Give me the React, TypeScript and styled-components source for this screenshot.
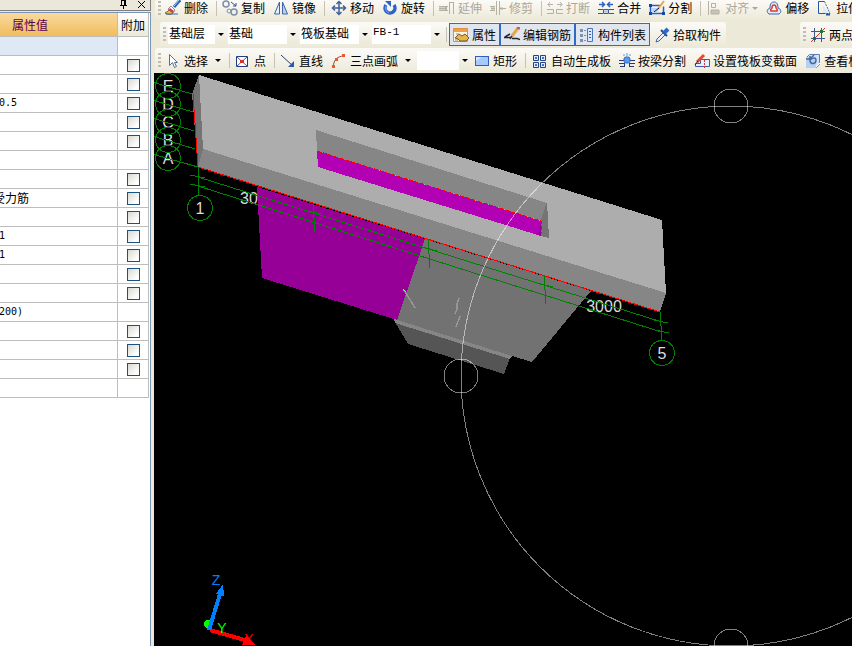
import React from "react";
import styled, { createGlobalStyle } from "styled-components";

const GlobalStyle = createGlobalStyle`
  * { box-sizing: border-box; }
  body {
    margin: 0;
    font-family: "Noto Sans CJK SC", sans-serif;
    font-size: 12px;
    line-height: 16px;
    color: #000;
    background: #ece9d8;
  }
  button, select, input { font: inherit; color: inherit; margin: 0; }
`;

const Page = styled.div`
  display: flex;
  height: 100vh;
  overflow: hidden;
`;

/* ---------- property panel ---------- */

const Panel = styled.aside`
  flex: none;
  width: 151px;
  display: flex;
  flex-direction: column;
  overflow: hidden;
`;

const PanelTitle = styled.header`
  flex: none;
  display: flex;
  justify-content: flex-end;
  gap: 9px;
  height: 11px;
  padding-right: 4px;
  border-right: 1px solid #808080;
  border-bottom: 1px solid #808080;
  background: #ebe8db;
`;

const TitleButton = styled.button`
  width: 9px;
  height: 9px;
  padding: 0;
  border: 0;
  background: none;
  display: flex;
`;

const PanelBody = styled.div`
  flex: 1;
  margin-top: 1px;
  border-top: 1px solid #7996ba;
  border-right: 1px solid #7996ba;
  background: #fff;
  overflow: hidden;
`;

const PropertyTable = styled.table`
  table-layout: fixed;
  width: 157px;
  margin-left: -8px;
  border-collapse: separate;
  border-spacing: 0;
`;

const ValueHead = styled.th`
  width: 126px;
  height: 24px;
  padding: 0;
  font-weight: 400;
  text-align: left;
  text-indent: 20px;
  color: #5c0050;
  border-right: 1px solid #bdbdbd;
  border-bottom: 1px solid #bdbdbd;
  background: linear-gradient(#f9d99f, #f0bd5c);
`;

const ExtraHead = styled.th`
  padding: 0;
  font-weight: 400;
  border-right: 1px solid #bdbdbd;
  border-bottom: 1px solid #bdbdbd;
  background: linear-gradient(#fff, #ece9d8);
`;

const ValueCell = styled.td<{ $selected?: boolean; $latin?: boolean }>`
  height: 19px;
  padding: 0 0 0 ${(p) => (p.$latin ? 7 : 1)}px;
  font-size: ${(p) => (p.$latin ? 10 : 12)}px;
  font-family: ${(p) => (p.$latin ? '"DejaVu Sans Mono", monospace' : "inherit")};
  white-space: nowrap;
  border-right: 1px solid #bdbdbd;
  border-bottom: 1px solid #bdbdbd;
  background: ${(p) => (p.$selected ? "#dfe9f6" : "#fff")};
`;

const ExtraCell = styled.td`
  padding: 0;
  border-right: 1px solid #bdbdbd;
  border-bottom: 1px solid #bdbdbd;
`;

const Tick = styled.input`
  appearance: none;
  display: block;
  width: 13px;
  height: 13px;
  margin: 1px auto 0 9px;
  border: 1px solid #1c5180;
  background: linear-gradient(135deg, #d8d8d2, #fff 80%);
`;

type Row = { value?: string; latin?: boolean; tick?: boolean; selected?: boolean };

const rows: Row[] = [
  { selected: true },
  { tick: true },
  { tick: true },
  { value: "0.5", latin: true, tick: true },
  { tick: true },
  { tick: true },
  {},
  { tick: true },
  { value: "受力筋", tick: true },
  { tick: true },
  { value: "1", latin: true, tick: true },
  { value: "1", latin: true, tick: true },
  { tick: true },
  { tick: true },
  { value: "200)", latin: true },
  { tick: true },
  { tick: true },
  { tick: true },
  {},
];

/* ---------- toolbars ---------- */

const Main = styled.main`
  flex: 1;
  min-width: 0;
  display: flex;
  flex-direction: column;
  border-left: 3px solid #ece9d8;
`;

const ToolRow = styled.div<{ $height: number; $gap?: number; $inset: number }>`
  flex: none;
  display: flex;
  height: ${(p) => p.$height}px;
  margin-bottom: ${(p) => p.$gap ?? 0}px;
  padding-left: ${(p) => p.$inset}px;
  overflow: hidden;
`;

const Bar = styled.div<{ $grow?: boolean; $lift?: boolean; $spaced?: boolean }>`
  display: flex;
  align-items: center;
  flex: ${(p) => (p.$grow ? "1 0 auto" : "none")};
  margin-left: ${(p) => (p.$spaced ? 74 : 0)}px;
  padding: 0 1px ${(p) => (p.$lift ? 4 : 0)}px 3px;
  border-radius: 3px;
  white-space: nowrap;
  background: linear-gradient(#fbfaf6, #f4f2e8 50%, #ece9d8);
`;

const Grip = styled.span`
  flex: none;
  width: 3px;
  height: 15px;
  background: repeating-linear-gradient(#c1beb0 0 2px, transparent 2px 4px);
`;

const Separator = styled.span<{ $wide?: boolean }>`
  flex: none;
  width: ${(p) => (p.$wide ? 7 : 6)}px;
  height: 15px;
  background: linear-gradient(#c5c2b4, #c5c2b4) 4px 0 / 1px 100% no-repeat;
`;

const ToolButton = styled.button<{ $pressed?: boolean }>`
  flex: none;
  display: flex;
  align-items: center;
  gap: 3px;
  height: 23px;
  padding: 0 ${(p) => (p.$pressed ? 3 : 4)}px;
  border: ${(p) => (p.$pressed ? "1px solid #316ac5" : "0")};
  background: ${(p) => (p.$pressed ? "#e1e6ee" : "none")};
  white-space: nowrap;

  &:disabled { color: #aca899; }
`;

const IconBox = styled.svg`
  flex: none;
  display: block;
  width: 16px;
  height: 16px;
  fill: none;
`;

const Arrow = styled.span<{ $wide?: boolean }>`
  width: 0;
  height: 0;
  margin-left: ${(p) => (p.$wide ? 4 : 0)}px;
  border: 3px solid transparent;
  border-bottom-width: 0;
  border-top-color: currentColor;
`;

const Combo = styled.label<{ $width: number }>`
  flex: none;
  display: grid;
  width: ${(p) => p.$width}px;
  height: 19px;
  margin-left: 2px;
  background: #fff;
`;

const ComboSelect = styled.select<{ $latin?: boolean }>`
  grid-area: 1 / 1;
  appearance: none;
  width: 100%;
  height: 19px;
  padding: 0 12px 4px 1px;
  border: 0;
  border-radius: 0;
  background: none;
  font-family: ${(p) => (p.$latin ? '"Liberation Mono", monospace' : "inherit")};
  font-size: ${(p) => (p.$latin ? 11 : 12)}px;
  line-height: 15px;
`;

const ComboArrow = styled.span`
  grid-area: 1 / 1;
  justify-self: end;
  display: flex;
  align-items: center;
  justify-content: center;
  width: 11px;
  background: linear-gradient(#faf9f4, #ece9d8);
  pointer-events: none;
`;

const Viewport = styled.section`
  flex: 1;
  min-height: 0;
  overflow: hidden;
  background: #000;
`;

const Scene = styled.svg`
  display: block;
  width: 100%;
  height: 100%;
`;

const SceneText = styled.text`
  font-family: "Liberation Sans", sans-serif;
  font-size: 16px;
  fill: #dcdcdc;
  text-anchor: middle;
`;

const AxisText = styled.text`
  font-family: "Liberation Sans", sans-serif;
  font-size: 14px;
  text-anchor: middle;
`;

/* ---------- icons ---------- */

const icons: Record<string, React.ReactNode> = {
  brush: (
    <>
      <path d="M15 0 9 7" stroke="#2c66b8" strokeWidth="3" />
      <path d="m14 0-5 6" stroke="#a9cdf5" />
      <path d="m6 6 4 4-2 3-5-4z" fill="#fff" stroke="#a08090" />
      <path d="m5 8 4 3-2 3-4-3z" fill="#c23b60" />
      <path d="M4 10c-1 2-3 2-4 3 3 2 6 2 8 0z" fill="#efb85c" stroke="#8f6430" />
      <path d="M1 14h12" stroke="#346ab4" />
    </>
  ),
  copy: (
    <>
      <circle cx="4" cy="4" r="3" stroke="#7b8fac" strokeWidth="1.5" />
      <circle cx="12" cy="12" r="3" stroke="#7b8fac" strokeWidth="1.5" />
      <circle cx="7" cy="11" r="2" stroke="#7b8fac" />
      <path d="m9 2 5 4m0-3v3h-3" stroke="#2b559c" />
    </>
  ),
  mirror: (
    <>
      <path d="M6.500 2v12h-5z" fill="#e7effc" stroke="#3c66a8" />
      <path d="M9.500 2v12h5z" fill="#b9d0f5" stroke="#3c66a8" />
    </>
  ),
  move: (
    <g stroke="#3b5f96" strokeWidth="1.500">
      <path d="M8 2v12M2 8h12" />
      <path d="M5.500 4 8 1.500 10.500 4M5.500 12 8 14.500 10.500 12M4 5.500 1.500 8 4 10.500M12 5.500 14.500 8 12 10.500" />
    </g>
  ),
  rotate: (
    <>
      <path d="M4 5a5 5 0 1 0 8 0" stroke="#2d62c8" strokeWidth="3.500" />
      <path d="M4 6a5 5 0 0 0 3 7" stroke="#77a6f4" />
      <path d="M3 1h6v6z" fill="#2d62c8" />
    </>
  ),
  extend: (
    <g stroke="#b4b1a4">
      <path d="M0 6.500h9M0 10.500h9M10.500 2v12M14.500 2v12M10 2.500h5" />
      <path d="M0 8.500h6M7 6v5" strokeWidth="2" />
    </g>
  ),
  trim: (
    <g stroke="#b4b1a4">
      <path d="M0 6.500h5M0 10.500h5M12 8.500h4M6.500 1v14M9.500 1v14" />
      <path d="M1 8.500h4M9 8.500h4" strokeWidth="2" />
    </g>
  ),
  breakOff: (
    <g stroke="#b4b1a4">
      <path d="M1 4.500h5M3 2 1 4.500 3 7M10 4.500h5M13 2l2 2.500L13 7" />
      <path d="M0 9.500h6.500v4H0M16 9.500H9.500v4H16" />
    </g>
  ),
  merge: (
    <>
      <path d="M1 4.500h5M4 2l2.500 2.500L4 7M15 4.500h-5M12 2 9.500 4.500 12 7" stroke="#2b62c0" strokeWidth="1.500" />
      <path d="M0 9.500h5.500v4H0M16 9.500h-5.500v4H16M6 9.500h4M6 13.500h4" stroke="#3d5a90" />
      <path d="M6 11.500h4" stroke="#a9c5f5" strokeWidth="2" />
    </>
  ),
  split: (
    <>
      <path d="M1.500 5.500h10M1.500 13.500h13v-7M1.500 5v8" stroke="#2560c4" strokeWidth="1.500" />
      <path d="M3 8h8l-4 5H2z" fill="#b9d5ff" />
      <path d="m15 1-6 8" stroke="#efa550" strokeWidth="2" />
      <path d="m10 8-5 4" stroke="#202020" />
      <path d="M0 4h3v3H0zM0 12h3v3H0zM13 12h3v3h-3z" fill="#1646a0" />
    </>
  ),
  align: (
    <g stroke="#b4b1a4">
      <path d="M2.500 1v14M5.500 3.500h4v4h-4z" />
      <path d="M5 10h8v4H5z" fill="#c8c5b8" />
    </g>
  ),
  offset: (
    <>
      <path d="M3 14c-3-2-2-5 1-6C4 3 6 2 8 2s4 1 4 6c3 1 4 4 1 6z" fill="#dfe9f8" stroke="#3c67a8" />
      <path d="M5 11c-1-1 0-2 1-3 0-2 1-3 2-3s2 1 2 3c1 1 2 2 1 3z" fill="#fff" stroke="#d63f36" strokeWidth="1.500" />
    </>
  ),
  stretch: (
    <>
      <path d="M7.500 1.500h-6v12h7" stroke="#2557a8" />
      <path d="M7.500 1.500 13 13.500H8" stroke="#3c67a8" strokeDasharray="2 1" />
      <path d="m6 5 5 8H6z" fill="#dde8fa" />
      <path d="M9 14.500h4" stroke="#2557a8" strokeWidth="2" />
    </>
  ),
  property: (
    <>
      <path d="M.5 1.500h14v13H.5z" fill="#fff6e2" stroke="#de8f3c" />
      <path d="M1 2h13v3H1z" fill="#f0a04c" />
      <path d="M2 11 6 7l3 2 3-2 4 4-3 3H7l-2-2z" fill="#e5b548" stroke="#7a5a20" />
      <path d="M3 7h3M2 13h3" stroke="#7d8fa8" />
    </>
  ),
  rebar: (
    <>
      <path d="M0 10.500h7M1 10l5-3M8 11.500h5l3 1" stroke="#262626" strokeWidth="1.500" />
      <path d="m14 1-6 8" stroke="#e5a54d" strokeWidth="3" />
      <path d="m15 0-1 2" stroke="#cf4d4d" strokeWidth="3" />
      <path d="m8 9-2 3" stroke="#333" strokeWidth="1.500" />
    </>
  ),
  list: (
    <>
      <path d="M8.500 1.500h5v13h-5z" fill="#dbe8ff" stroke="#4b77b8" />
      <path d="M10 4.500h2M10 7.500h2M10 10.500h2" stroke="#2c5ca8" />
      <path d="M1 2h3v3H1zM1 7h3v3H1zM1 12h3v3H1z" fill="#7c91b0" />
      <path d="M5 3.500h2M5 8.500h2M5 13.500h2" stroke="#7c91b0" />
    </>
  ),
  picker: (
    <>
      <path d="m10 5-7 7-1 3 3-1 7-7" fill="#eaf2ff" stroke="#3c66a8" />
      <path d="m7 3 6 6" stroke="#1e4b94" strokeWidth="2" />
      <path d="m10 6 4-4" stroke="#2d6ac8" strokeWidth="4" />
    </>
  ),
  twoPoint: (
    <>
      <path d="M4.500 1v14M11.500 1v14M1 4.500h14M1 11.500h14" stroke="#41588a" />
      <path d="M1 15 15 1" stroke="#d23131" />
      <path d="M3 10h3v3H3zM10 3h3v3h-3z" fill="#24752a" />
    </>
  ),
  cursor: (
    <path d="M4.500 1.500v11l3-3 2 5 2-1-2-4h3z" fill="#fff" stroke="#587099" />
  ),
  point: (
    <>
      <path d="M1.500 3.500h11v10h-11z" fill="#fff" stroke="#233d80" />
      <path d="m2 4 10 9M12 4 2 13" stroke="#3563ba" />
      <path d="M5 7h4v3H5z" fill="#e02c2c" />
    </>
  ),
  line: (
    <>
      <path d="m1 2 12 11" stroke="#263b73" />
      <path d="M14 8v6H8z" fill="#2858b4" />
    </>
  ),
  arc: (
    <>
      <path d="M2.500 14C2 8 6 3 13 3" stroke="#8c5146" />
      <path d="M1 12h3v3H1zM4 5h3v3H4zM11 1h3v3h-3z" fill="#e55b32" />
    </>
  ),
  rect: (
    <>
      <rect x="1.500" y="3.500" width="13" height="9" fill="#a6c9ff" stroke="#2d61bd" />
      <path d="M2 8 8 4H2z" fill="#d6e7ff" />
    </>
  ),
  autoSlab: (
    <g fill="#dfeaff" stroke="#29437a">
      <path d="M1.500 2.500h5v5h-5zM8.500 2.500h5v5h-5zM1.500 9.500h5v5h-5zM8.500 9.500h5v5h-5z" />
      <path d="M3 4h2v2H3zM10 4h2v2h-2zM3 11h2v2H3zM10 11h2v2h-2z" fill="#3676dc" stroke="none" />
    </g>
  ),
  beamSplit: (
    <>
      <path d="M0 7.500h5M11 7.500h5M1 13.500h5M10 13.500h5M5.500 10v4M10.500 10v4M0 10.500h5M11 10.500h5" stroke="#263e78" />
      <rect x="5" y="4" width="6" height="6" rx="2" fill="#5a9af2" stroke="#3567b8" />
      <path d="M8 0v3M4 2h2M10 2h2" stroke="#5a9af2" />
    </>
  ),
  section: (
    <>
      <path d="M1.500 10.500h5v-4h9v7h-14z" fill="#e6efff" stroke="#3b5fae" />
      <path d="m10 2-7 7" stroke="#e34a35" strokeWidth="3" />
      <path d="m4 8-3 4" stroke="#222" />
      <path d="M10.500 7v8" stroke="#d33333" strokeDasharray="2 1" />
    </>
  ),
  view: (
    <>
      <path d="M4.500 1.500h10v10l-3 3H1.500v-10z" fill="#cfe2ff" stroke="#5f7fb4" />
      <path d="M1 4h10v11H1z" fill="#b6d0f5" />
      <path d="m11 14 4-4" stroke="#fff" />
      <path d="M5 3v5c1 4 6 3 6-1 0-3-4-2-6 0M1 6h4l4-4" stroke="#46699d" strokeWidth="1.500" />
    </>
  ),
};

const Icon = ({ name }: { name: string }) => (
  <IconBox viewBox="0 0 16 16" aria-hidden="true">
    {icons[name]}
  </IconBox>
);

type ToolProps = {
  icon: string;
  label: string;
  pressed?: boolean;
  disabled?: boolean;
  menu?: "tight" | "wide";
};

const Tool = ({ icon, label, pressed, disabled, menu }: ToolProps) => (
  <ToolButton type="button" $pressed={pressed} aria-pressed={pressed} disabled={disabled}>
    <Icon name={icon} />
    <span>{label}</span>
    {menu && <Arrow $wide={menu === "wide"} />}
  </ToolButton>
);

const Choice = ({ name, value, width, latin }: { name: string; value: string; width: number; latin?: boolean }) => (
  <Combo $width={width}>
    <ComboSelect aria-label={name} $latin={latin} defaultValue={value}>
      <option value={value}>{value}</option>
    </ComboSelect>
    <ComboArrow>
      <Arrow />
    </ComboArrow>
  </Combo>
);

/* ---------- model view ---------- */

const bubbles = [
  { name: "E", y: 86 },
  { name: "D", y: 104 },
  { name: "C", y: 122 },
  { name: "B", y: 140 },
  { name: "A", y: 158 },
];

const Model = () => (
  <Scene role="img" aria-label="三维模型">
    <g transform="translate(-154 -73)">
      <g shapeRendering="crispEdges">
        <path d="M257 187 425 239 397 320 262 278z" fill="#960096" />
        <path d="M425 239 591 291 532 362 512 356 397 320z" fill="#727272" />
        <path d="M395 322 510 358 504 374 408 344z" fill="#555" />
        <path d="M394 319 512 356 510 359 395 323z" fill="#868686" />
        <path d="M199 75 203 149 198 167 192 94z" fill="#747474" />
        <path d="M199 75 662 220 666 293 203 149z" fill="#adadad" />
        <path d="M203 149 666 293 660 312 198 167z" fill="#868686" />
        <path d="M316 130 547 203 542 221 317 151z" fill="#868686" />
        <path d="M547 202 549 238 541 236 541 220z" fill="#747474" />
        <path d="M317 151 541 221 541 236 318 167z" fill="#b400b4" />
        <path d="M541 222v14l-3-1z" fill="#960096" />
        <path d="M317 151 541 221v12" fill="none" stroke="#f00" strokeDasharray="4 2" />
        <path d="M193 94 198 167 660 312" fill="none" stroke="#f00" />
        <path d="m404 290 11 18M459 298l-2 6v5l-2 5M460 316l-4 11" fill="none" stroke="#969696" strokeWidth="1.500" />
        <path d="m403 289 3 3" stroke="#80ff80" />
      </g>
      {bubbles.map((b) => (
        <SceneText key={b.name} x="168" y={b.y + 6}>
          {b.name}
        </SceneText>
      ))}
      <SceneText x="200" y="214">1</SceneText>
      <SceneText x="662" y="359">5</SceneText>
      <SceneText x="249" y="204">30</SceneText>
      <SceneText x="604" y="312">3000</SceneText>
      <g fill="none" stroke="#008200" shapeRendering="crispEdges">
        <path d="M154 82.500 192 94M154 100.500 193 112M154 118.500 194 131M154 136.500 195 149M154 154.500 198 167" />
        <path d="M190 175 205 178M190 184 205 187M198 177 662 322M198 186 660 331.500" />
        <path d="M198 167 199 195M313 204 315 232M428 240 430 268M544 276 546 304M660 312 662 340" />
        <path d="M307 211 322 214M422 247 437 251M537 283 553 287M654 320 668 323M655 330 669 333" />
        {bubbles.map((b) => (
          <circle key={b.name} cx="168" cy={b.y} r="12.500" />
        ))}
        <circle cx="200" cy="208" r="12.500" />
        <circle cx="662" cy="353" r="12.500" />
      </g>
      <g fill="none" stroke="#fff" strokeOpacity="0.5" shapeRendering="crispEdges">
        <circle cx="731" cy="376" r="270" />
        <circle cx="731" cy="106" r="17" />
        <circle cx="461" cy="376" r="17" />
        <circle cx="731" cy="646" r="17" />
      </g>
      <g shapeRendering="crispEdges">
        <circle cx="208" cy="624" r="4" fill="#0f0" />
        <path d="m210 630 38 11" stroke="#f00" strokeWidth="4" />
        <path d="m246 636 10 9h-14z" fill="#f00" />
        <path d="m209 630 11-36" stroke="#0080ff" strokeWidth="4" />
        <path d="M223 584 216 594 224 596z" fill="#0080ff" />
      </g>
      <AxisText x="216" y="585" fill="#0080ff">Z</AxisText>
      <AxisText x="222" y="633" fill="#0f0">Y</AxisText>
      <AxisText x="249" y="644" fill="#f00">X</AxisText>
    </g>
  </Scene>
);

export default function App() {
  return (
    <>
      <GlobalStyle />
      <Page>
        <Panel>
          <PanelTitle>
            <TitleButton type="button" aria-label="固定">
              <svg width="9" height="9" viewBox="0 0 9 9" fill="none" stroke="#000" shapeRendering="crispEdges">
                <path d="M2.500 5V.5h3V5M6.500 0v5M1 5.500h7M4.500 6v3" />
              </svg>
            </TitleButton>
            <TitleButton type="button" aria-label="关闭">
              <svg width="9" height="9" viewBox="0 0 9 9" stroke="#000">
                <path d="m1 1 7 7M8 1 1 8" />
              </svg>
            </TitleButton>
          </PanelTitle>
          <PanelBody>
            <PropertyTable>
              <thead>
                <tr>
                  <ValueHead>属性值</ValueHead>
                  <ExtraHead>附加</ExtraHead>
                </tr>
              </thead>
              <tbody>
                {rows.map((row, i) => (
                  <tr key={i}>
                    <ValueCell $selected={row.selected} $latin={row.latin}>
                      {row.value}
                    </ValueCell>
                    <ExtraCell>
                      {row.tick && <Tick type="checkbox" aria-label="附加" />}
                    </ExtraCell>
                  </tr>
                ))}
              </tbody>
            </PropertyTable>
          </PanelBody>
        </Panel>
        <Main>
          <ToolRow $height={20} $gap={2} $inset={1}>
            <Bar $grow $lift>
              <Grip />
              <Tool icon="brush" label="删除" />
              <Separator />
              <Tool icon="copy" label="复制" />
              <Tool icon="mirror" label="镜像" />
              <Separator $wide />
              <Tool icon="move" label="移动" />
              <Tool icon="rotate" label="旋转" />
              <Separator />
              <Tool icon="extend" label="延伸" disabled />
              <Tool icon="trim" label="修剪" disabled />
              <Separator />
              <Tool icon="breakOff" label="打断" disabled />
              <Tool icon="merge" label="合并" />
              <Tool icon="split" label="分割" />
              <Separator />
              <Tool icon="align" label="对齐" menu="tight" disabled />
              <Tool icon="offset" label="偏移" />
              <Tool icon="stretch" label="拉伸" />
            </Bar>
          </ToolRow>
          <ToolRow $height={25} $gap={1} $inset={6}>
            <Bar>
              <Grip />
              <Choice name="楼层" value="基础层" width={58} />
              <Choice name="分类" value="基础" width={70} />
              <Choice name="构件类型" value="筏板基础" width={70} />
              <Choice name="构件" value="FB-1" width={70} latin />
              <Separator $wide />
              <Tool icon="property" label="属性" pressed />
              <Tool icon="rebar" label="编辑钢筋" pressed />
              <Tool icon="list" label="构件列表" pressed />
              <Tool icon="picker" label="拾取构件" />
            </Bar>
            <Bar $grow $spaced>
              <Grip />
              <Tool icon="twoPoint" label="两点" />
            </Bar>
          </ToolRow>
          <ToolRow $height={25} $inset={1}>
            <Bar $grow>
              <Grip />
              <Tool icon="cursor" label="选择" menu="wide" />
              <Separator />
              <Tool icon="point" label="点" />
              <Separator />
              <Tool icon="line" label="直线" />
              <Tool icon="arc" label="三点画弧" menu="wide" />
              <Choice name="绘制方式" value="" width={53} />
              <Tool icon="rect" label="矩形" />
              <Separator $wide />
              <Tool icon="autoSlab" label="自动生成板" />
              <Tool icon="beamSplit" label="按梁分割" />
              <Tool icon="section" label="设置筏板变截面" />
              <Tool icon="view" label="查看板" />
            </Bar>
          </ToolRow>
          <Viewport>
            <Model />
          </Viewport>
        </Main>
      </Page>
    </>
  );
}
